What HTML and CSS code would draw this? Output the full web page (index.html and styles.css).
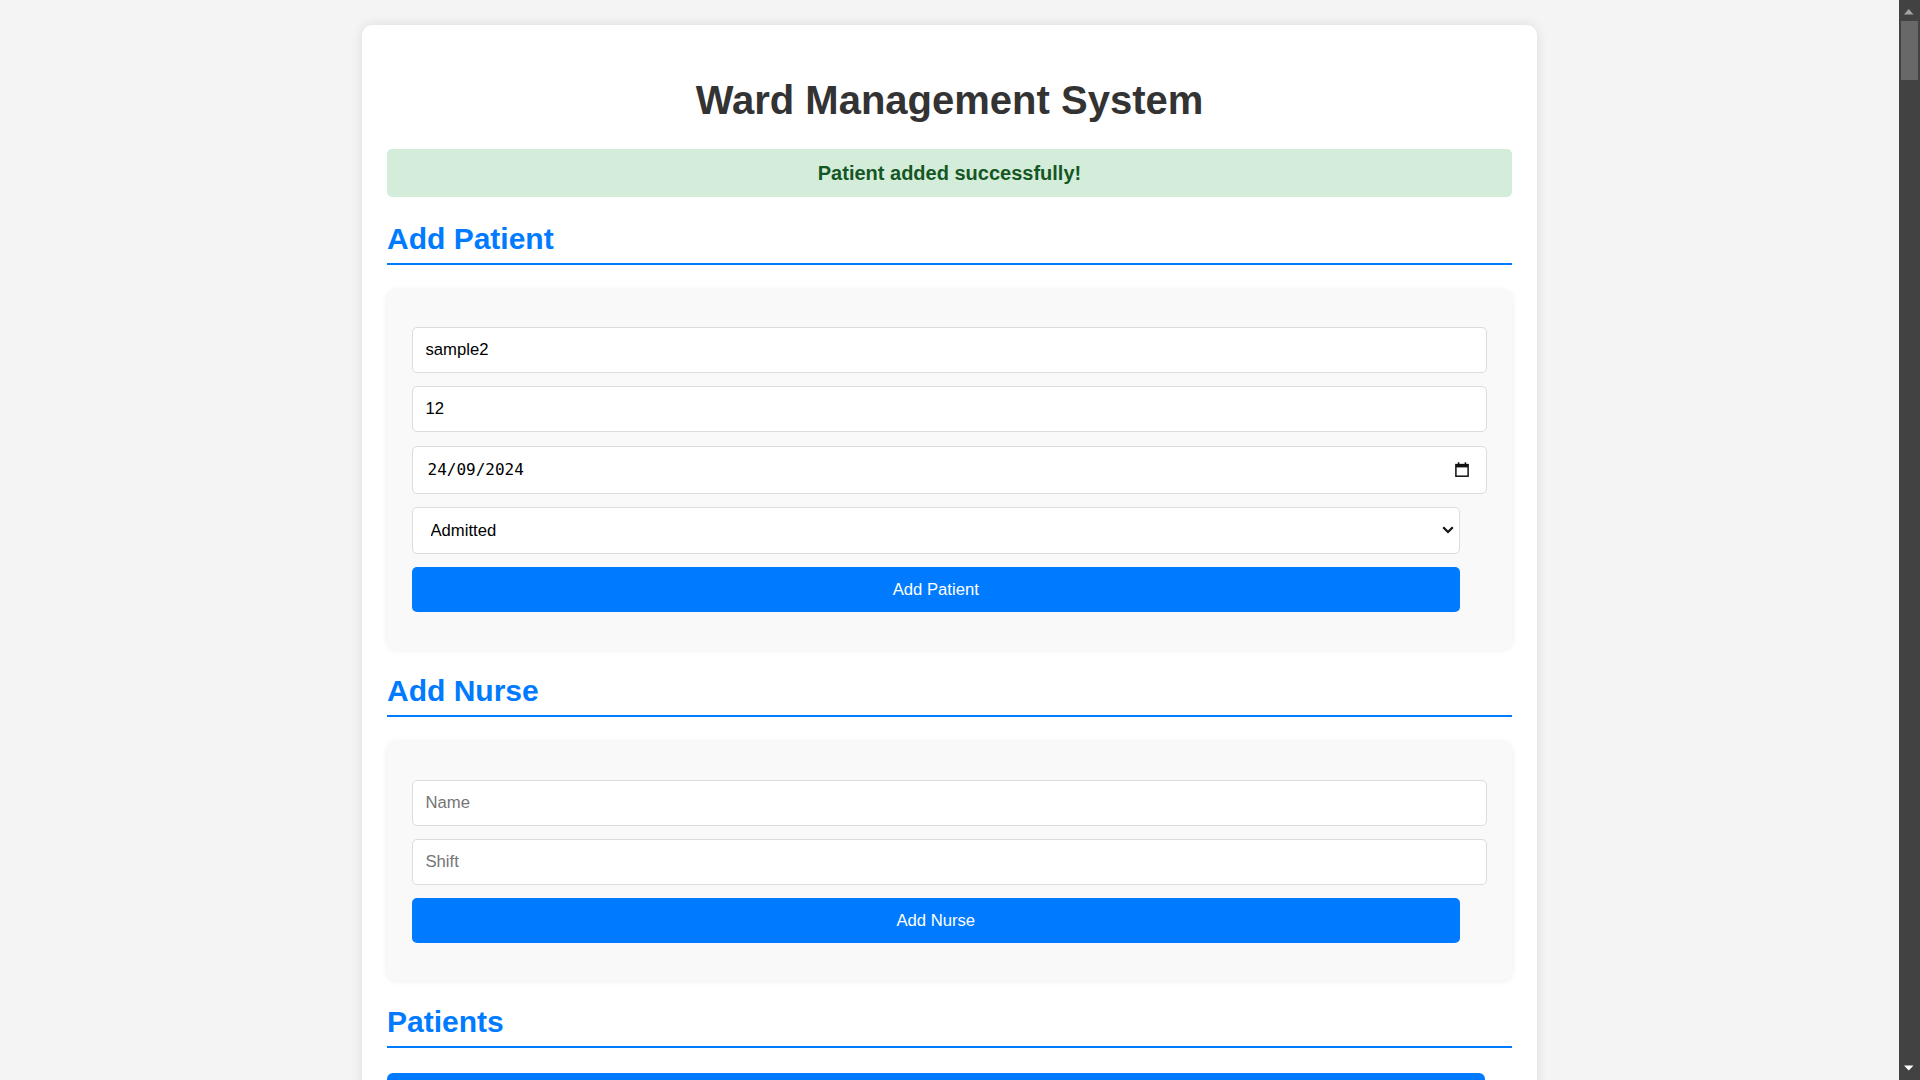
FILE: index.html
```html
<!DOCTYPE html>
<html lang="en">
<head>
<meta charset="utf-8">
<title>Ward Management System</title>
<link rel="stylesheet" href="styles.css">
</head>
<body>
<div class="viewport">
  <main class="page">
    <div class="container">
      <h1 class="title">Ward Management System</h1>
      <div class="alert">Patient added successfully!</div>

      <h2 class="section-title">Add Patient</h2>
      <form class="card">
        <input class="field" type="text" value="sample2" placeholder="Name">
        <input class="field" type="text" value="12" placeholder="Age">
        <div class="field date-field">
          <span class="date-text">24/09/2024</span>
          <svg class="cal-icon" width="14" height="15" viewBox="0 0 14 15">
            <rect x="2.8" y="0.3" width="1.6" height="3" fill="#111"/>
            <rect x="9.6" y="0.3" width="1.6" height="3" fill="#111"/>
            <rect x="0.9" y="2.6" width="12.2" height="11.6" fill="none" stroke="#111" stroke-width="1.5"/>
            <rect x="0.9" y="2.4" width="12.2" height="3" fill="#111"/>
          </svg>
        </div>
        <div class="select-wrap">
          <select class="field select-field">
            <option>Admitted</option>
            <option>Discharged</option>
          </select>
          <svg class="chevron" width="12" height="8" viewBox="0 0 12 8">
            <polyline points="1.2,1.3 6,6 10.8,1.3" fill="none" stroke="#111" stroke-width="2.2"/>
          </svg>
        </div>
        <button class="btn" type="button">Add Patient</button>
      </form>

      <h2 class="section-title">Add Nurse</h2>
      <form class="card">
        <input class="field" type="text" placeholder="Name">
        <input class="field" type="text" placeholder="Shift">
        <button class="btn" type="button">Add Nurse</button>
      </form>

      <h2 class="section-title">Patients</h2>
      <table class="data-table">
        <thead>
          <tr><th>Name</th><th>Age</th><th>Admission Date</th><th>Status</th></tr>
        </thead>
      </table>
    </div>
  </main>

  <div class="scrollbar">
    <div class="sb-button">
      <svg width="21" height="21" viewBox="0 0 21 21"><path d="M5 14.5 L14.5 14.5 L9.75 9 Z" fill="#a3a3a3"/></svg>
    </div>
    <div class="sb-thumb"></div>
    <div class="sb-track"></div>
    <div class="sb-button">
      <svg width="21" height="21" viewBox="0 0 21 21"><path d="M5 6.5 L14.5 6.5 L9.75 11.5 Z" fill="#ffffff"/></svg>
    </div>
  </div>
</div>
</body>
</html>
```
FILE: styles.css
```css
html,
body {
  margin: 0;
  height: 100%;
  background: #f4f4f4;
}

body {
  font-family: "Liberation Sans", Arial, sans-serif;
  color: #333;
  overflow: hidden;
}

.viewport {
  display: flex;
  height: 100vh;
}

.page {
  flex: 1;
  min-width: 0;
  padding: 25px 0;
  overflow: hidden;
}

.scrollbar {
  display: flex;
  flex-direction: column;
  width: 21px;
  flex-shrink: 0;
  background: #424242;
}

.sb-button {
  height: 21px;
  flex-shrink: 0;
}

.sb-button svg {
  display: block;
}

.sb-thumb {
  height: 59px;
  margin: 0 2px;
  background: #686868;
}

.sb-track {
  flex: 1;
}

.container {
  width: 1125px;
  margin: 0 auto;
  padding: 25px;
  background: #fff;
  border-radius: 10px;
  box-shadow: 0 0 12px rgba(0, 0, 0, 0.1);
}

.title {
  margin: 26.5px 0;
  font-size: 40px;
  line-height: 46px;
  font-weight: bold;
  text-align: center;
  color: #333;
}

.alert {
  margin-bottom: 24.5px;
  padding: 12.5px;
  background: #d4edda;
  color: #155724;
  border-radius: 5px;
  text-align: center;
  font-size: 20px;
  line-height: 23px;
  font-weight: bold;
}

.section-title {
  margin: 0 0 25px;
  padding-bottom: 6.5px;
  border-bottom: 2px solid #007bff;
  font-size: 30px;
  line-height: 34.5px;
  font-weight: bold;
  color: #007bff;
}

.card {
  display: flex;
  flex-direction: column;
  gap: 13.25px;
  margin: 0 0 24.5px;
  padding: 37.5px 25px;
  background: #f9f9f9;
  border-radius: 10px;
  box-shadow: 0 0 6px rgba(0, 0, 0, 0.08);
}

.field {
  box-sizing: border-box;
  width: 100%;
  height: 46px;
  margin: 0;
  padding: 0 12.5px;
  border: 1px solid #dcdcdc;
  border-radius: 5px;
  background: #fff;
  font-family: "Liberation Sans", Arial, sans-serif;
  font-size: 16.67px;
  color: #000;
  outline: none;
}

.field::placeholder {
  color: #757575;
}

.date-field {
  display: flex;
  align-items: center;
  justify-content: space-between;
  height: 48px;
  padding: 0 17.5px 0 14.5px;
}

.date-text {
  font-family: "DejaVu Sans Mono", "Liberation Mono", monospace;
  font-size: 16px;
  color: #000;
}

.cal-icon {
  display: block;
}

.select-wrap {
  position: relative;
  width: calc(100% - 27.5px);
}

.select-field {
  display: block;
  height: 47px;
  padding-left: 17.5px;
  appearance: none;
  -webkit-appearance: none;
}

.chevron {
  position: absolute;
  right: 6px;
  top: 19.5px;
  pointer-events: none;
}

.btn {
  width: calc(100% - 27.5px);
  height: 45px;
  border: none;
  border-radius: 5px;
  background: #007bff;
  color: #fff;
  font-family: "Liberation Sans", Arial, sans-serif;
  font-size: 16.67px;
  cursor: pointer;
}

.data-table {
  width: calc(100% - 27px);
  border-collapse: separate;
  border-spacing: 0;
  font-size: 16.67px;
}

.data-table th {
  padding: 12.5px;
  background: #007bff;
  color: #fff;
  text-align: left;
}

.data-table th:first-child {
  border-top-left-radius: 6px;
}

.data-table th:last-child {
  border-top-right-radius: 6px;
}
```
